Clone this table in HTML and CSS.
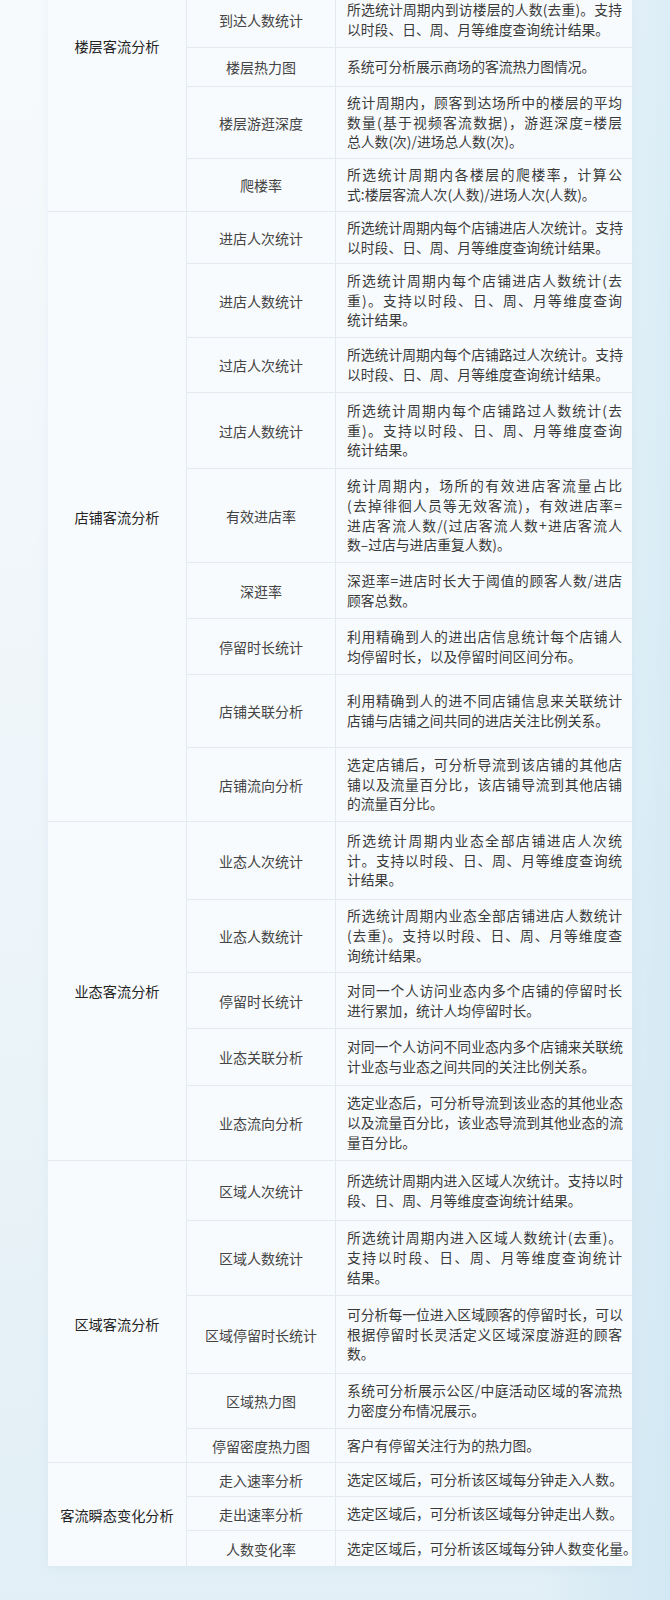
FILE: index.html
```html
<!DOCTYPE html>
<html lang="zh-CN">
<head>
<meta charset="utf-8">
<title>客流分析功能说明</title>
<link rel="stylesheet" href="styles.css">
</head>
<body>
<div class="page">
  <div class="spec">
    <div class="grp span-4 first">楼层客流分析</div>
    <div class="item">到达人数统计</div>
    <div class="desc"><span class="ln">所选统计周期内到访楼层的人数(去重)。支持</span><span class="ln">以时段、日、周、月等维度查询统计结果。</span></div>
    <div class="item">楼层热力图</div>
    <div class="desc"><span class="ln">系统可分析展示商场的客流热力图情况。</span></div>
    <div class="item">楼层游逛深度</div>
    <div class="desc"><span class="ln">统计周期内，顾客到达场所中的楼层的平均</span><span class="ln">数量(基于视频客流数据)，游逛深度=楼层</span><span class="ln">总人数(次)/进场总人数(次)。</span></div>
    <div class="item">爬楼率</div>
    <div class="desc"><span class="ln">所选统计周期内各楼层的爬楼率，计算公</span><span class="ln">式:楼层客流人次(人数)/进场人次(人数)。</span></div>

    <div class="grp span-9">店铺客流分析</div>
    <div class="item">进店人次统计</div>
    <div class="desc"><span class="ln">所选统计周期内每个店铺进店人次统计。支持</span><span class="ln">以时段、日、周、月等维度查询统计结果。</span></div>
    <div class="item">进店人数统计</div>
    <div class="desc"><span class="ln">所选统计周期内每个店铺进店人数统计(去</span><span class="ln">重)。支持以时段、日、周、月等维度查询</span><span class="ln">统计结果。</span></div>
    <div class="item">过店人次统计</div>
    <div class="desc"><span class="ln">所选统计周期内每个店铺路过人次统计。支持</span><span class="ln">以时段、日、周、月等维度查询统计结果。</span></div>
    <div class="item">过店人数统计</div>
    <div class="desc"><span class="ln">所选统计周期内每个店铺路过人数统计(去</span><span class="ln">重)。支持以时段、日、周、月等维度查询</span><span class="ln">统计结果。</span></div>
    <div class="item">有效进店率</div>
    <div class="desc"><span class="ln">统计周期内，场所的有效进店客流量占比</span><span class="ln">(去掉徘徊人员等无效客流)，有效进店率=</span><span class="ln">进店客流人数/(过店客流人数+进店客流人</span><span class="ln">数–过店与进店重复人数)。</span></div>
    <div class="item">深逛率</div>
    <div class="desc"><span class="ln">深逛率=进店时长大于阈值的顾客人数/进店</span><span class="ln">顾客总数。</span></div>
    <div class="item">停留时长统计</div>
    <div class="desc"><span class="ln">利用精确到人的进出店信息统计每个店铺人</span><span class="ln">均停留时长，以及停留时间区间分布。</span></div>
    <div class="item">店铺关联分析</div>
    <div class="desc"><span class="ln">利用精确到人的进不同店铺信息来关联统计</span><span class="ln">店铺与店铺之间共同的进店关注比例关系。</span></div>
    <div class="item">店铺流向分析</div>
    <div class="desc"><span class="ln">选定店铺后，可分析导流到该店铺的其他店</span><span class="ln">铺以及流量百分比，该店铺导流到其他店铺</span><span class="ln">的流量百分比。</span></div>

    <div class="grp span-5">业态客流分析</div>
    <div class="item">业态人次统计</div>
    <div class="desc"><span class="ln">所选统计周期内业态全部店铺进店人次统</span><span class="ln">计。支持以时段、日、周、月等维度查询统</span><span class="ln">计结果。</span></div>
    <div class="item">业态人数统计</div>
    <div class="desc"><span class="ln">所选统计周期内业态全部店铺进店人数统计</span><span class="ln">(去重)。支持以时段、日、周、月等维度查</span><span class="ln">询统计结果。</span></div>
    <div class="item">停留时长统计</div>
    <div class="desc"><span class="ln">对同一个人访问业态内多个店铺的停留时长</span><span class="ln">进行累加，统计人均停留时长。</span></div>
    <div class="item">业态关联分析</div>
    <div class="desc"><span class="ln">对同一个人访问不同业态内多个店铺来关联统</span><span class="ln">计业态与业态之间共同的关注比例关系。</span></div>
    <div class="item">业态流向分析</div>
    <div class="desc"><span class="ln">选定业态后，可分析导流到该业态的其他业态</span><span class="ln">以及流量百分比，该业态导流到其他业态的流</span><span class="ln">量百分比。</span></div>

    <div class="grp span-5 low">区域客流分析</div>
    <div class="item">区域人次统计</div>
    <div class="desc"><span class="ln">所选统计周期内进入区域人次统计。支持以时</span><span class="ln">段、日、周、月等维度查询统计结果。</span></div>
    <div class="item">区域人数统计</div>
    <div class="desc"><span class="ln">所选统计周期内进入区域人数统计(去重)。</span><span class="ln">支持以时段、日、周、月等维度查询统计</span><span class="ln">结果。</span></div>
    <div class="item">区域停留时长统计</div>
    <div class="desc"><span class="ln">可分析每一位进入区域顾客的停留时长，可以</span><span class="ln">根据停留时长灵活定义区域深度游逛的顾客</span><span class="ln">数。</span></div>
    <div class="item">区域热力图</div>
    <div class="desc"><span class="ln">系统可分析展示公区/中庭活动区域的客流热</span><span class="ln">力密度分布情况展示。</span></div>
    <div class="item">停留密度热力图</div>
    <div class="desc"><span class="ln">客户有停留关注行为的热力图。</span></div>

    <div class="grp span-3">客流瞬态变化分析</div>
    <div class="item">走入速率分析</div>
    <div class="desc"><span class="ln">选定区域后，可分析该区域每分钟走入人数。</span></div>
    <div class="item">走出速率分析</div>
    <div class="desc"><span class="ln">选定区域后，可分析该区域每分钟走出人数。</span></div>
    <div class="item">人数变化率</div>
    <div class="desc"><span class="ln">选定区域后，可分析该区域每分钟人数变化量。</span></div>
  </div>
</div>
</body>
</html>
```

FILE: styles.css
```css
html, body {
  margin: 0;
  padding: 0;
}

body {
  min-height: 1600px;
  font-family: "Noto Sans CJK SC", "Noto Sans", sans-serif;
  background:
    linear-gradient(90deg, rgba(255,255,255,0) 80%, rgba(196,226,241,0.55) 100%),
    linear-gradient(180deg, #f7fafc 0%, #eff6fa 45%, #e2eff6 100%);
}

.page {
  height: 1600px;
  overflow: hidden;
  padding-left: 48px;
}

.spec {
  margin-top: -8px;
  width: 584px;
  display: grid;
  grid-template-columns: 138px 148px 296px;
  grid-template-rows: 55px 38px 71px 52px 51px 73px 54px 75px 93px 55px 55px 72px 73px 77px 72px 55px 56px 74px 59px 74px 77px 54px 33px 33px 33px 35px;
  gap: 1px;
  background: #e4eaf0;
  box-shadow: 0 2px 10px rgba(150, 185, 210, 0.12);
}

.grp,
.item,
.desc {
  background: #f8fbfe;
}

.grp {
  display: flex;
  align-items: center;
  justify-content: center;
  font-size: 14.2px;
  color: #232323;
}

.span-3 { grid-row: span 3; }
.span-4 { grid-row: span 4; }
.span-5 { grid-row: span 5; }
.span-9 { grid-row: span 9; }

.grp.first {
  padding-bottom: 112px;
}

.grp.low {
  padding-top: 24px;
}

.item {
  display: flex;
  align-items: center;
  justify-content: center;
  font-size: 14px;
  color: #444;
}

.desc {
  display: flex;
  flex-direction: column;
  justify-content: center;
  padding: 0 10px 0 11px;
  font-size: 13.8px;
  line-height: 19.75px;
  color: #3a3a3a;
}

.ln {
  display: block;
  white-space: nowrap;
  text-align: justify;
  text-align-last: justify;
}

.ln:last-child {
  text-align-last: left;
}
```
